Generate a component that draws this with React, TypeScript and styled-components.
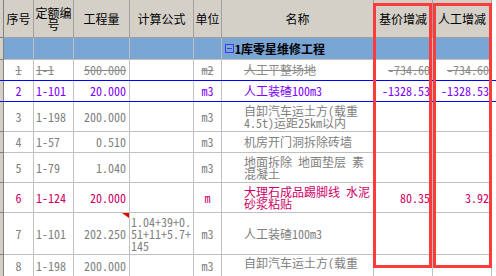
import React from "react";
import styled, { createGlobalStyle, css } from "styled-components";

const GlobalStyle = createGlobalStyle`
  html, body {
    margin: 0;
    padding: 0;
    background: #fff;
  }
`;

// gutter, 序号, 定额编号, 工程量, 计算公式, 单位, 名称, 基价增减, 人工增减
const COLUMNS = "4px 30px 40px 56px 64px 28px 152px 59px 59px";

type Tone = "normal" | "deleted" | "selected" | "marked" | "head";

const toneColor: Record<Tone, string> = {
  normal: "#808080",
  deleted: "#8a8a8a",
  selected: "#8000ff",
  marked: "#cc0066",
  head: "#000",
};

const Sheet = styled.div`
  position: relative;
  width: 496px;
  height: 276px;
  overflow: hidden;
  background: #fff;
  font-family: "Noto Sans Mono CJK SC", "Noto Sans CJK SC", "DejaVu Sans Mono", monospace;
  font-size: 12px;
  line-height: 12px;
`;

const Row = styled.div<{ $h: number; $tone: Tone; $selected?: boolean }>`
  position: relative;
  display: grid;
  grid-template-columns: ${COLUMNS};
  height: ${(p) => p.$h}px;
  color: ${(p) => toneColor[p.$tone]};
  text-decoration: ${(p) => (p.$tone === "deleted" ? "line-through" : "none")};
  ${(p) =>
    p.$selected &&
    css`
      &::after {
        content: "";
        position: absolute;
        left: 0;
        right: 0;
        top: -1px;
        bottom: 0;
        border-top: 1px solid #0000ff;
        border-bottom: 1px solid #0000ff;
        pointer-events: none;
        z-index: 1;
      }
    `}
`;

const Gutter = styled.div`
  background: #d4d0c8;
  border-right: 1px solid #808080;
  border-bottom: 1px solid #808080;
`;

const HeadCell = styled.div`
  display: flex;
  align-items: center;
  justify-content: center;
  text-align: center;
  padding: 0 1px;
  background: #d4d0c8;
  border-right: 1px solid #a0a0a0;
  border-bottom: 1px solid #a0a0a0;
  overflow: hidden;
`;

const Cell = styled.div`
  position: relative;
  display: flex;
  align-items: center;
  min-width: 0;
  border-right: 1px solid #c0c0c0;
  border-bottom: 1px solid #c0c0c0;
  overflow: hidden;
  word-break: break-all;
`;

const GroupCell = styled(Cell)`
  background: #7aa6d6;
`;

const CenterCell = styled(Cell)`
  justify-content: center;
  text-align: center;
`;

const CodeCell = styled(Cell)`
  padding-left: 2px;
`;

const QtyCell = styled(Cell)<{ $note?: boolean }>`
  justify-content: flex-end;
  text-align: right;
  padding-right: 3px;
  ${(p) =>
    p.$note &&
    css`
      &::after {
        content: "";
        position: absolute;
        top: 0;
        right: 0;
        border-top: 5px solid #e00000;
        border-left: 7px solid transparent;
      }
    `}
`;

const FormulaCell = styled(Cell)`
  padding-left: 1px;
`;

const NameCell = styled(Cell)<{ $top?: boolean }>`
  padding-left: 22px;
  padding-right: 1px;
  word-break: normal;
  ${(p) =>
    p.$top &&
    css`
      align-items: flex-start;
      padding-top: 2px;
    `}
`;

const NameText = styled.span<{ $lines?: number }>`
  display: block;
  ${(p) =>
    p.$lines &&
    css`
      max-height: ${p.$lines * 12}px;
      overflow: hidden;
    `}
`;

const MoneyCell = styled(Cell)`
  justify-content: flex-end;
  text-align: right;
  padding-right: 2px;
`;

const GroupTitle = styled(GroupCell)`
  padding-left: 3px;
  gap: 1px;
  color: #000;
  font-weight: bold;
  white-space: nowrap;
`;

const Highlight = styled.div<{ $left: number }>`
  position: absolute;
  top: 3px;
  left: ${(p) => p.$left}px;
  width: 59px;
  height: 265px;
  box-sizing: border-box;
  border: 3px solid #fc3b3b;
  z-index: 2;
  pointer-events: none;
`;

function CollapseIcon() {
  return (
    <svg width="9" height="9" viewBox="0 0 9 9">
      <rect x="0.5" y="0.5" width="8" height="8" fill="none" stroke="#3a3af0" />
      <line x1="2" y1="4.5" x2="7" y2="4.5" stroke="#3a3af0" />
    </svg>
  );
}

type Item = {
  no: string;
  code: string;
  qty: string;
  formula?: string;
  unit: string;
  name: string;
  base?: string;
  labor?: string;
  tone: Tone;
  h: number;
  note?: boolean;
  clip?: boolean;
};

const items: Item[] = [
  { no: "1", code: "1-1", qty: "500.000", unit: "m2", name: "人工平整场地", base: "-734.60", labor: "-734.60", tone: "deleted", h: 21 },
  { no: "2", code: "1-101", qty: "20.000", unit: "m3", name: "人工装碴100m3", base: "-1328.53", labor: "-1328.53", tone: "selected", h: 21 },
  { no: "3", code: "1-198", qty: "200.000", unit: "m3", name: "自卸汽车运土方(载重4.5t)运距25km以内", tone: "normal", h: 30 },
  { no: "4", code: "1-57", qty: "0.510", unit: "m3", name: "机房开门洞拆除砖墙", tone: "normal", h: 21 },
  { no: "5", code: "1-79", qty: "1.040", unit: "m3", name: "地面拆除 地面垫层 素混凝土", tone: "normal", h: 30 },
  { no: "6", code: "1-124", qty: "20.000", unit: "m", name: "大理石成品踢脚线 水泥砂浆粘贴", base: "80.35", labor: "3.92", tone: "marked", h: 30 },
  { no: "7", code: "1-101", qty: "202.250", formula: "1.04+39+0.51+11+5.7+145", unit: "m3", name: "人工装碴100m3", tone: "normal", h: 42, note: true },
  { no: "8", code: "1-198", qty: "200.000", unit: "m3", name: "自卸汽车运土方(载重4.5t)运距25km以内", tone: "normal", h: 22, clip: true },
];

const headers = ["序号", "定额编号", "工程量", "计算公式", "单位", "名称", "基价增减", "人工增减"];

export default function App() {
  return (
    <>
      <GlobalStyle />
      <Sheet>
        <Row $h={38} $tone="head">
          <Gutter />
          {headers.map((h) => (
            <HeadCell key={h}>{h}</HeadCell>
          ))}
        </Row>
        <Row $h={22} $tone="head">
          <Gutter />
          <GroupCell />
          <GroupCell />
          <GroupCell />
          <GroupCell />
          <GroupCell />
          <GroupTitle>
            <CollapseIcon />
            1库零星维修工程
          </GroupTitle>
          <GroupCell />
          <GroupCell />
        </Row>
        {items.map((it) => (
          <Row key={it.no} $h={it.h} $tone={it.tone} $selected={it.tone === "selected"}>
            <Gutter />
            <CenterCell>{it.no}</CenterCell>
            <CodeCell>{it.code}</CodeCell>
            <QtyCell $note={it.note}>{it.qty}</QtyCell>
            <FormulaCell>{it.formula}</FormulaCell>
            <CenterCell>{it.unit}</CenterCell>
            <NameCell $top={it.clip}>
              <NameText $lines={it.clip ? 1 : undefined}>{it.name}</NameText>
            </NameCell>
            <MoneyCell>{it.base}</MoneyCell>
            <MoneyCell>{it.labor}</MoneyCell>
          </Row>
        ))}
        <Highlight $left={373} />
        <Highlight $left={433} />
      </Sheet>
    </>
  );
}
